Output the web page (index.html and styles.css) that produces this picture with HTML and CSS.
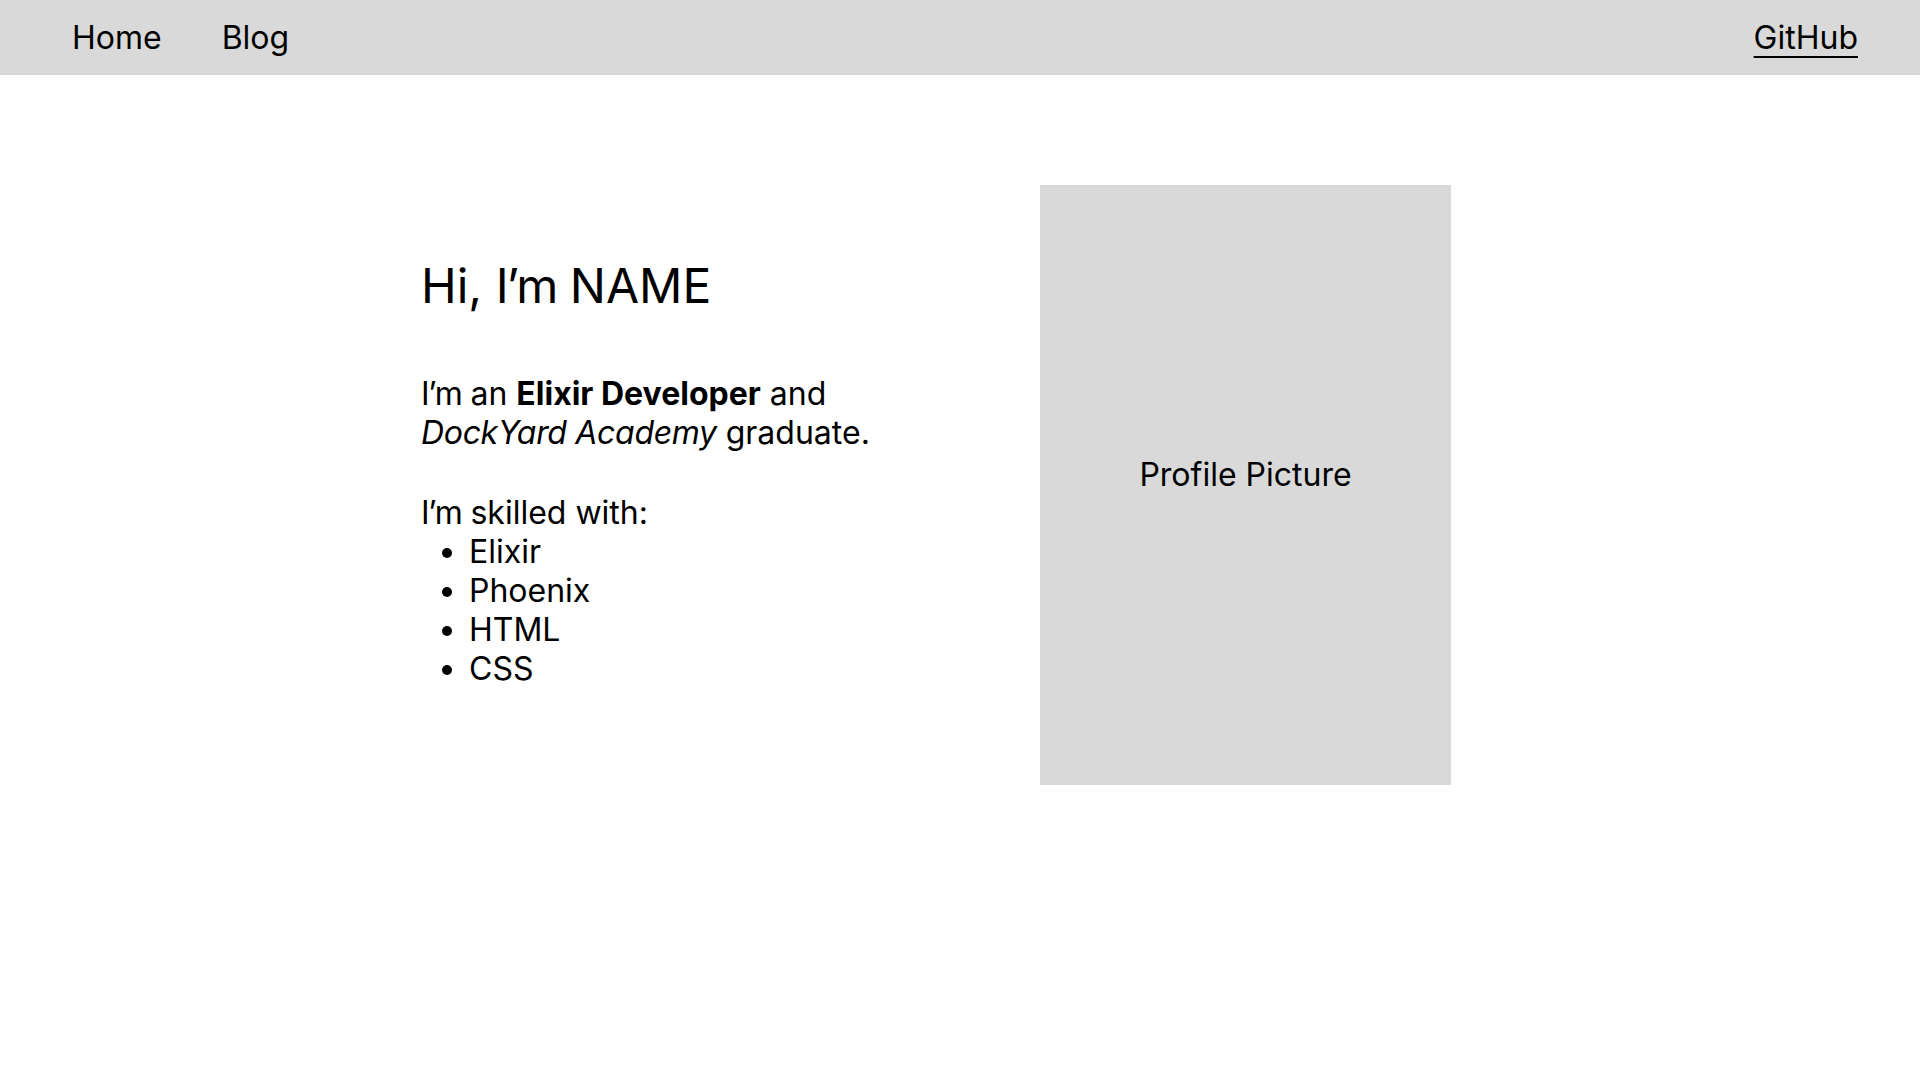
FILE: index.html
```html
<!DOCTYPE html>
<html lang="en">
<head>
<meta charset="utf-8">
<title>Home</title>
<link rel="stylesheet" href="styles.css">
</head>
<body>
<nav class="topbar">
  <div class="nav-left">
    <a class="nav-link" href="#">Home</a>
    <a class="nav-link" href="#">Blog</a>
  </div>
  <a class="nav-link nav-github" href="#">GitHub</a>
</nav>
<main class="hero">
  <section class="intro">
    <h1 class="intro-title">Hi, <span class="tight">I’m</span> NAME</h1>
    <p class="intro-text"><span class="tight">I’m</span> an <strong>Elixir Developer</strong> and<br><em class="school">DockYard Academy</em> graduate.</p>
    <p class="intro-skills"><span class="tight">I’m</span> skilled with:</p>
    <ul class="skill-list">
      <li>Elixir</li>
      <li>Phoenix</li>
      <li>HTML</li>
      <li>CSS</li>
    </ul>
  </section>
  <div class="profile-picture">Profile Picture</div>
</main>
</body>
</html>
```

FILE: styles.css
```css
* {
  box-sizing: border-box;
}

html, body {
  margin: 0;
  padding: 0;
  background: #ffffff;
}

body {
  font-family: Inter, "Noto Sans", sans-serif;
  font-size: 32px;
  line-height: normal;
  color: #000000;
}

.topbar {
  height: 75px;
  background: #d9d9d9;
  display: flex;
  align-items: center;
  justify-content: space-between;
  padding: 0 62px 0 72px;
}

.nav-left {
  display: flex;
  gap: 60px;
}

.nav-link {
  color: #000000;
  text-decoration: none;
  font-size: 32px;
}

.nav-github {
  text-decoration: underline;
  text-decoration-thickness: 2px;
  text-underline-offset: 7px;
}

.hero {
  display: flex;
  align-items: flex-start;
  padding: 110px 0 0 421px;
}

.intro {
  width: 619px;
  padding-top: 71px;
}

.intro-title {
  font-size: 48px;
  font-weight: 400;
  line-height: normal;
  margin: 0 0 59px 0;
}

.tight {
  letter-spacing: -0.04em;
}

.school {
  letter-spacing: -0.01em;
}

.intro-text {
  margin: 0 0 41px 0;
}

.intro-skills {
  margin: 0;
}

.skill-list {
  margin: 0;
  padding-left: 48px;
}

.profile-picture {
  width: 411px;
  height: 600px;
  background: #d9d9d9;
  display: flex;
  align-items: center;
  justify-content: center;
  padding-bottom: 22px;
  font-size: 32px;
}
```
